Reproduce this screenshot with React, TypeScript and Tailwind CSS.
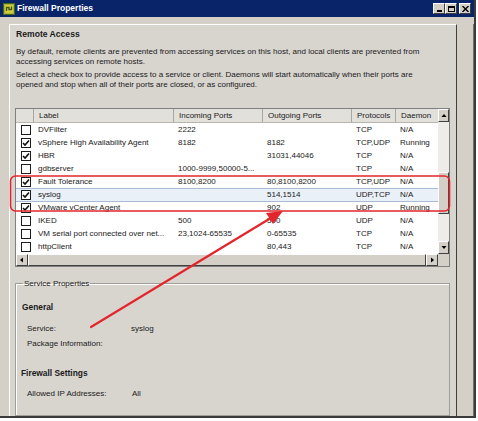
import React from 'react'

interface Service {
  checked: boolean
  label: string
  incoming: string
  outgoing: string
  protocols: string
  daemon: string
  selected?: boolean
}

const services: Service[] = [
  { checked: false, label: 'DVFilter', incoming: '2222', outgoing: '', protocols: 'TCP', daemon: 'N/A' },
  { checked: true, label: 'vSphere High Availability Agent', incoming: '8182', outgoing: '8182', protocols: 'TCP,UDP', daemon: 'Running' },
  { checked: true, label: 'HBR', incoming: '', outgoing: '31031,44046', protocols: 'TCP', daemon: 'N/A' },
  { checked: false, label: 'gdbserver', incoming: '1000-9999,50000-5...', outgoing: '', protocols: 'TCP', daemon: 'N/A' },
  { checked: true, label: 'Fault Tolerance', incoming: '8100,8200', outgoing: '80,8100,8200', protocols: 'TCP,UDP', daemon: 'N/A' },
  { checked: true, label: 'syslog', incoming: '', outgoing: '514,1514', protocols: 'UDP,TCP', daemon: 'N/A', selected: true },
  { checked: true, label: 'VMware vCenter Agent', incoming: '', outgoing: '902', protocols: 'UDP', daemon: 'Running' },
  { checked: false, label: 'IKED', incoming: '500', outgoing: '500', protocols: 'UDP', daemon: 'N/A' },
  { checked: false, label: 'VM serial port connected over net...', incoming: '23,1024-65535', outgoing: '0-65535', protocols: 'TCP', daemon: 'N/A' },
  { checked: false, label: 'httpClient', incoming: '', outgoing: '80,443', protocols: 'TCP', daemon: 'N/A' },
]

function Checkbox({ checked }: { checked: boolean }) {
  return (
    <div className="w-[10px] h-[10px] border border-[#1c1c1c] bg-white flex items-center justify-center">
      {checked && (
        <svg width="8" height="8" viewBox="0 0 8 8">
          <path d="M1 4 L3 6 L7 1.5" fill="none" stroke="#111" strokeWidth="1.6" />
        </svg>
      )}
    </div>
  )
}

// classic 3d button face
function ScrollButton({ dir, className }: { dir: 'up' | 'down' | 'left' | 'right'; className?: string }) {
  const paths = {
    up: 'M1.5 5 L4 2 L6.5 5 Z',
    down: 'M1.5 3 L4 6 L6.5 3 Z',
    left: 'M5 1.5 L2 4 L5 6.5 Z',
    right: 'M3 1.5 L6 4 L3 6.5 Z',
  }
  return (
    <div
      className={`bg-[#d4d0c8] border border-t-white border-l-white border-r-[#404040] border-b-[#404040] flex items-center justify-center ${className ?? ''}`}
    >
      <svg width="8" height="8" viewBox="0 0 8 8">
        <path d={paths[dir]} fill="#000" />
      </svg>
    </div>
  )
}

function TitleBar() {
  return (
    <div className="h-[17px] bg-[#0a246a] flex items-center pl-[3px] pr-[3px]">
      <svg width="12" height="12" viewBox="0 0 12 12" className="shrink-0">
        <rect x="0.5" y="0.5" width="11" height="11" fill="#9fb83a" stroke="#4d6a12" />
        <rect x="2" y="2" width="8" height="8" fill="#d7c93c" />
        <path d="M3.5 8 L3.5 4.5 L6 4.5 L6 6.5 L8.5 6.5 L8.5 3.5" fill="none" stroke="#3d5a10" strokeWidth="1.3" />
      </svg>
      <span className="ml-[2px] text-white font-bold text-[8.5px] leading-none">Firewall Properties</span>
      <div className="ml-auto flex items-center">
        <div className="w-[12px] h-[11px] bg-[#d4d0c8] border border-t-white border-l-white border-r-[#404040] border-b-[#404040] flex items-end justify-center pb-[1px]">
          <div className="w-[5px] h-[2px] bg-black" />
        </div>
        <div className="w-[12px] h-[11px] bg-[#d4d0c8] border border-t-white border-l-white border-r-[#404040] border-b-[#404040] flex items-center justify-center">
          <div className="w-[7px] h-[6px] border border-black border-t-2" />
        </div>
        <div className="ml-[2px] w-[12px] h-[11px] bg-[#d4d0c8] border border-t-white border-l-white border-r-[#404040] border-b-[#404040] flex items-center justify-center">
          <svg width="7" height="6" viewBox="0 0 7 6">
            <path d="M0.5 0 L6.5 6 M6.5 0 L0.5 6" stroke="#000" strokeWidth="1.4" />
          </svg>
        </div>
      </div>
    </div>
  )
}

const colW = ['w-[17px]', 'w-[140px]', 'w-[89px]', 'w-[89px]', 'w-[44px]', 'w-[43px]']

function ServiceTable() {
  const headers = ['', 'Label', 'Incoming Ports', 'Outgoing Ports', 'Protocols', 'Daemon']

  return (
    <div className="ml-[5px] w-[435px] border border-[#808080] bg-white flex flex-col">
      <div className="flex">
        <div className="w-[422px] flex flex-col">
          <div className="h-[14px] flex bg-[#e2e0da] border-b border-[#b8b5ae]">
            {headers.map((h, i) => (
              <div
                key={i}
                className={`${colW[i]} h-full flex items-center pl-[5px] whitespace-nowrap ${i > 0 ? 'border-l border-[#aaa79f]' : ''}`}
              >
                {h}
              </div>
            ))}
          </div>
          {services.map(s => (
            <div
              key={s.label}
              className={`h-[13.1px] flex items-center ${s.selected ? 'bg-[#eaf0f8] border-y border-[#a9bcd6]' : ''}`}
            >
              <div className={`${colW[0]} flex justify-center pl-[2px]`}>
                <Checkbox checked={s.checked} />
              </div>
              <div className={`${colW[1]} pl-[5px] whitespace-nowrap overflow-hidden`}>{s.label}</div>
              <div className={`${colW[2]} pl-[5px] whitespace-nowrap overflow-hidden`}>{s.incoming}</div>
              <div className={`${colW[3]} pl-[5px] whitespace-nowrap`}>{s.outgoing}</div>
              <div className={`${colW[4]} pl-[5px] whitespace-nowrap`}>{s.protocols}</div>
              <div className={`${colW[5]} pl-[5px] whitespace-nowrap`}>{s.daemon}</div>
            </div>
          ))}
        </div>
        <div className="w-[11px] flex flex-col bg-[#eeece8]">
          <ScrollButton dir="up" className="h-[13px]" />
          <div className="flex-1 flex flex-col">
            <div className="h-[50px]" />
            <div className="h-[42px] bg-[#d4d0c8] border border-t-white border-l-white border-r-[#404040] border-b-[#404040]" />
          </div>
          <ScrollButton dir="down" className="h-[13px]" />
        </div>
      </div>
      <div className="h-[12px] flex">
        <div className="w-[422px] flex bg-[#eeece8]">
          <ScrollButton dir="left" className="w-[12px]" />
          <div className="flex-1 bg-[#d4d0c8] border border-t-white border-l-white border-r-[#404040] border-b-[#404040]" />
          <ScrollButton dir="right" className="w-[12px]" />
        </div>
        <div className="w-[11px] bg-[#d4d0c8]" />
      </div>
    </div>
  )
}

function Overlay() {
  return (
    <svg className="absolute left-0 top-0 pointer-events-none" width="478" height="421" viewBox="0 0 478 421">
      <rect x="10.5" y="176" width="439" height="35" rx="5" fill="none" stroke="#e3262d" strokeWidth="1.6" />
      <path d="M91 327 L270 218.5" stroke="#e3262d" strokeWidth="2.2" strokeLinecap="round" />
      <path d="M283 211 L273 224 L266 213 Z" fill="#e3262d" />
    </svg>
  )
}

export default function App() {
  return (
    <div className="relative w-[478px] h-[421px] bg-white overflow-hidden font-['Liberation_Sans',Arial,sans-serif] text-[8px] text-[#1a1a1a]">
      <div className="w-[476px] h-[418px] bg-[#d4d0c8] border-r-2 border-b-2 border-[#3c3c3c] flex flex-col">
        <TitleBar />
        <div className="flex-1 flex pt-[7px] pl-[9px]">
          <div className="w-[448px] bg-[#d8d5cf] border-t border-l border-white border-r border-r-[#404040] flex flex-col pt-[4px]">
            <div className="pl-[6px] h-[10px] leading-[10px] font-bold text-[8.6px]">Remote Access</div>
            <div className="pl-[6px] mt-[8px] leading-[10px] w-[414px]">
              By default, remote clients are prevented from accessing services on this host, and local clients are prevented from accessing services on remote hosts.
            </div>
            <div className="pl-[6px] mt-[3px] leading-[10px] w-[414px]">
              Select a check box to provide access to a service or client. Daemons will start automatically when their ports are opened and stop when all of their ports are closed, or as configured.
            </div>
            <div className="mt-[18px]">
              <ServiceTable />
            </div>
            <fieldset className="ml-[5px] mt-[12px] w-[435px] flex-1 border border-[#a09d96] shadow-[inset_1px_1px_0_#fff] pl-[6px]">
              <legend className="ml-[1px] px-[1px] leading-[10px]">Service Properties</legend>
              <div className="mt-[13px] font-bold text-[8.4px] leading-[10px]">General</div>
              <div className="mt-[12px] pl-[5px] flex leading-[10px]">
                <span className="w-[104px]">Service:</span>
                <span>syslog</span>
              </div>
              <div className="mt-[5px] pl-[5px] leading-[10px]">Package Information:</div>
              <div className="mt-[19px] -ml-[1px] font-bold text-[8.4px] leading-[10px]">Firewall Settings</div>
              <div className="mt-[11px] pl-[5px] flex leading-[10px]">
                <span className="w-[105px]">Allowed IP Addresses:</span>
                <span>All</span>
              </div>
            </fieldset>
          </div>
          <div className="flex-1 border-r border-[#707070]" />
        </div>
      </div>
      <Overlay />
    </div>
  )
}
